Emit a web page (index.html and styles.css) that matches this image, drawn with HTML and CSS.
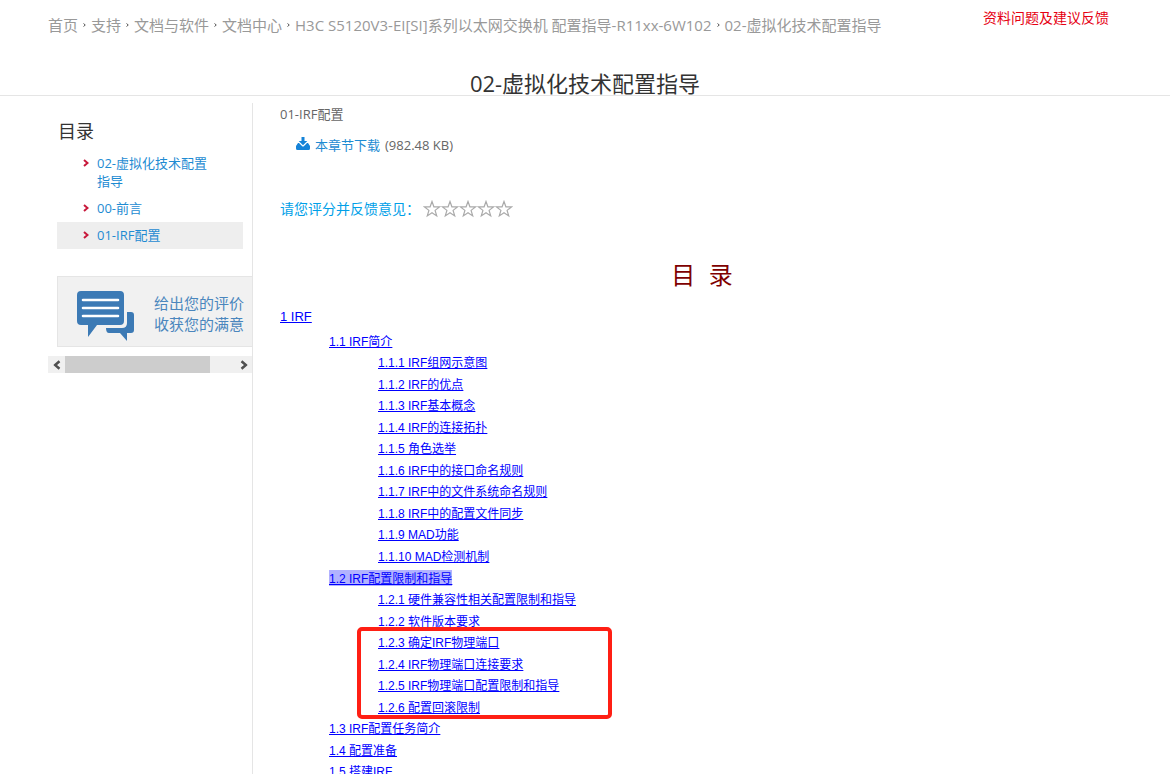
FILE: index.html
```html
<!DOCTYPE html>
<html lang="zh-CN">
<head>
    <meta charset="UTF-8">
    <meta name="viewport" content="width=device-width, initial-scale=1.0">
    <title>02-虚拟化技术配置指导</title>
    <link rel="stylesheet" href="styles.css">
</head>
<body>
    <svg class="defs" width="0" height="0">
        <symbol id="arrow" viewBox="0 0 6 8"><path d="M1 1l3.5 3L1 7" fill="none" stroke="currentColor" stroke-width="2"/></symbol>
        <symbol id="star" viewBox="0 0 18 18"><path d="M9 1.5l1.9 5.3 5.6.1-4.4 3.5 1.6 5.5L9 12.7l-4.7 3.2 1.6-5.5L1.5 6.9l5.6-.1z" fill="none" stroke="#aaa" stroke-width="1.2"/></symbol>
    </svg>
    <header class="header">
        <div class="top">
            <nav class="crumbs">
                <a href="#">首页</a>
                <svg class="sep"><use href="#arrow"/></svg>
                <a href="#">支持</a>
                <svg class="sep"><use href="#arrow"/></svg>
                <a href="#">文档与软件</a>
                <svg class="sep"><use href="#arrow"/></svg>
                <a href="#">文档中心</a>
                <svg class="sep"><use href="#arrow"/></svg>
                <a href="#">H3C S5120V3-EI[SI]系列以太网交换机 配置指导-R11xx-6W102</a>
                <svg class="sep"><use href="#arrow"/></svg>
                <a href="#">02-虚拟化技术配置指导</a>
            </nav>
            <a class="feedback" href="#">资料问题及建议反馈</a>
        </div>
        <h1>02-虚拟化技术配置指导</h1>
    </header>
    <div class="main">
        <aside class="sidebar">
            <h2>目录</h2>
            <ul class="chapters">
                <li><svg class="mark"><use href="#arrow"/></svg><a href="#">02-虚拟化技术配置指导</a></li>
                <li><svg class="mark"><use href="#arrow"/></svg><a href="#">00-前言</a></li>
                <li class="active"><svg class="mark"><use href="#arrow"/></svg><a href="#">01-IRF配置</a></li>
            </ul>
            <a class="banner" href="#">
                <svg width="58" height="50" viewBox="0 0 58 50">
                    <path d="M4 0h39q4 0 4 4v26q0 4-4 4H20L11 46V34H4q-4 0-4-4V4q0-4 4-4z" fill="#3c7ab5"/>
                    <path d="M6 9h35M6 17h35M6 25h35" stroke="#fff" stroke-width="2.6" stroke-linecap="round"/>
                    <path d="M50 21h4q3 0 3 3v15q0 3-3 3h-4v8l-7-8H32q-3 0-3-5h16q5 0 5-5z" fill="#3c7ab5"/>
                </svg>
                <span>给出您的评价<br>收获您的满意</span>
            </a>
            <div class="scrollbar">
                <button type="button" aria-label="向左"><svg class="flip" width="8" height="10" viewBox="0 0 6 8"><use href="#arrow"/></svg></button>
                <div class="thumb"></div>
                <button type="button" aria-label="向右"><svg width="8" height="10" viewBox="0 0 6 8"><use href="#arrow"/></svg></button>
            </div>
        </aside>
        <article class="content">
            <p class="chapter">01-IRF配置</p>
            <p class="download">
                <svg width="14" height="13" viewBox="0 0 14 13" fill="#1583d8">
                    <path d="M5.5 0h3v4h2.8L7 8.2 2.7 4h2.8z"/>
                    <path d="M2 6L0 9v2.5Q0 13 1.5 13h11q1.5 0 1.5-1.5V9l-2-3h-1L7.5 9.5h-1L3 6z"/>
                </svg>
                <a href="#">本章节下载</a>
                <span>(982.48 KB)</span>
            </p>
            <div class="rating">
                <span>请您评分并反馈意见：</span>
                <div class="stars">
                    <button type="button" aria-label="1星"><svg><use href="#star"/></svg></button>
                    <button type="button" aria-label="2星"><svg><use href="#star"/></svg></button>
                    <button type="button" aria-label="3星"><svg><use href="#star"/></svg></button>
                    <button type="button" aria-label="4星"><svg><use href="#star"/></svg></button>
                    <button type="button" aria-label="5星"><svg><use href="#star"/></svg></button>
                </div>
            </div>
            <h2 class="toc-title">目&nbsp;&nbsp;录</h2>
            <a class="toc-root" href="#">1 IRF</a>
            <ul class="toc">
                <li><a href="#">1.1 IRF简介</a>
                    <ul>
                        <li><a href="#">1.1.1 IRF组网示意图</a></li>
                        <li><a href="#">1.1.2 IRF的优点</a></li>
                        <li><a href="#">1.1.3 IRF基本概念</a></li>
                        <li><a href="#">1.1.4 IRF的连接拓扑</a></li>
                        <li><a href="#">1.1.5 角色选举</a></li>
                        <li><a href="#">1.1.6 IRF中的接口命名规则</a></li>
                        <li><a href="#">1.1.7 IRF中的文件系统命名规则</a></li>
                        <li><a href="#">1.1.8 IRF中的配置文件同步</a></li>
                        <li><a href="#">1.1.9 MAD功能</a></li>
                        <li><a href="#">1.1.10 MAD检测机制</a></li>
                    </ul>
                </li>
                <li><a class="selected" href="#">1.2 IRF配置限制和指导</a>
                    <ul>
                        <li><a href="#">1.2.1 硬件兼容性相关配置限制和指导</a></li>
                        <li><a href="#">1.2.2 软件版本要求</a></li>
                        <li class="marked"><a href="#">1.2.3 确定IRF物理端口</a><div class="mark-box"></div></li>
                        <li><a href="#">1.2.4 IRF物理端口连接要求</a></li>
                        <li><a href="#">1.2.5 IRF物理端口配置限制和指导</a></li>
                        <li><a href="#">1.2.6 配置回滚限制</a></li>
                    </ul>
                </li>
                <li><a href="#">1.3 IRF配置任务简介</a></li>
                <li><a href="#">1.4 配置准备</a></li>
                <li><a href="#">1.5 搭建IRF</a></li>
            </ul>
        </article>
    </div>
</body>
</html>
```

FILE: styles.css
```css
* {
    box-sizing: border-box;
}
body {
    margin: 0;
    height: 100vh;
    overflow: hidden;
    display: flex;
    flex-direction: column;
    background-color: #fff;
    color: #666;
    font-family: "Open Sans", "Noto Sans CJK SC", sans-serif;
    font-size: 13px;
    line-height: 18px;
}
h1, h2, p, ul {
    margin: 0;
    padding: 0;
    font-weight: normal;
}
ul {
    list-style: none;
}
a {
    color: #1e8bd2;
    text-decoration: none;
}
button {
    display: flex;
    align-items: center;
    justify-content: center;
    padding: 0;
    border: 0;
    background: none;
    color: #505050;
}
.defs {
    position: absolute;
}

/* header */
.header {
    border-bottom: 1px solid #e5e5e5;
}
.top {
    display: flex;
    justify-content: space-between;
    height: 72px;
    padding: 8px 61px 0 48px;
    font-size: 14px;
    line-height: 20px;
    white-space: nowrap;
}
.crumbs {
    display: flex;
    align-items: center;
    gap: 5px;
    height: 20px;
    margin-top: 7px;
    font-size: 15px;
}
.crumbs a {
    color: #999;
}
.sep {
    width: 3px;
    height: 6px;
    overflow: visible;
    color: #555;
}
.top .feedback {
    color: #e60012;
}
h1 {
    height: 23px;
    color: #333;
    font-size: 22px;
    line-height: 22px;
    text-align: center;
}

/* layout */
.main {
    display: flex;
    flex: 1;
    min-height: 0;
    padding: 7px 46px 0 48px;
}
.sidebar {
    width: 205px;
    flex-shrink: 0;
    padding-top: 15px;
    border-right: 1px solid #e5e5e5;
}
.sidebar h2 {
    padding-left: 10px;
    color: #333;
    font-size: 18px;
    line-height: 26px;
}
.chapters {
    margin: 6px 9px 0;
}
.chapters li {
    display: flex;
    gap: 8px;
    padding: 4px 30px 5px 26px;
}
.chapters .active {
    background-color: #eee;
}
.mark {
    width: 6px;
    height: 8px;
    flex-shrink: 0;
    margin-top: 5px;
    color: #c8193c;
}
.banner {
    display: flex;
    gap: 19px;
    height: 71px;
    margin: 27px 0 0 9px;
    padding: 14px 0 0 19px;
    border: 1px solid #e5e5e5;
    border-right: 0;
    background-color: #f1f1f1;
    color: #4a86bd;
    font-size: 15px;
    line-height: 21px;
    white-space: nowrap;
    overflow: hidden;
}
.banner svg {
    flex-shrink: 0;
}
.banner span {
    padding-top: 2px;
}
.scrollbar {
    display: flex;
    height: 17px;
    margin-top: 9px;
    background-color: #f0f0f0;
}
.scrollbar button {
    width: 17px;
}
.thumb {
    width: 145px;
    margin-right: auto;
    background-color: #cdcdcd;
}
.flip {
    transform: rotate(180deg);
}

/* content */
.content {
    flex: 1;
    padding: 2px 0 0 27px;
}
.download {
    display: flex;
    gap: 5px;
    margin-top: 13px;
    padding-left: 16px;
}
.download svg {
    margin-top: 1px;
}
.rating {
    display: flex;
    align-items: center;
    gap: 3px;
    margin-top: 46px;
    color: #009fe8;
    font-size: 14px;
}
.stars {
    display: flex;
}
.stars svg {
    width: 18px;
    height: 18px;
}
.toc-title {
    margin-top: 40px;
    color: #800000;
    font-family: "Liberation Sans", "Noto Sans CJK SC", sans-serif;
    font-size: 24px;
    line-height: 36px;
    text-align: center;
}
.toc-root, .toc {
    font-family: "Liberation Sans", "Noto Sans CJK SC", sans-serif;
}
.toc-root, .toc a {
    color: #0000ff;
    text-decoration: underline;
}
.toc-root {
    display: block;
    width: fit-content;
    margin-top: 14px;
}
.toc {
    margin-top: 6px;
    padding-left: 49px;
    font-size: 12px;
    line-height: 21px;
}
.toc ul {
    padding-left: 49px;
}
.toc li:nth-child(even) {
    padding-top: 1px;
}
.toc .selected {
    padding-top: 2px;
    background-color: #b2b2ff;
}
.marked {
    position: relative;
}
.mark-box {
    position: absolute;
    top: -6px;
    left: -21px;
    width: 255px;
    height: 92px;
    border: 4px solid #ff1f14;
    border-radius: 5px;
}
```
